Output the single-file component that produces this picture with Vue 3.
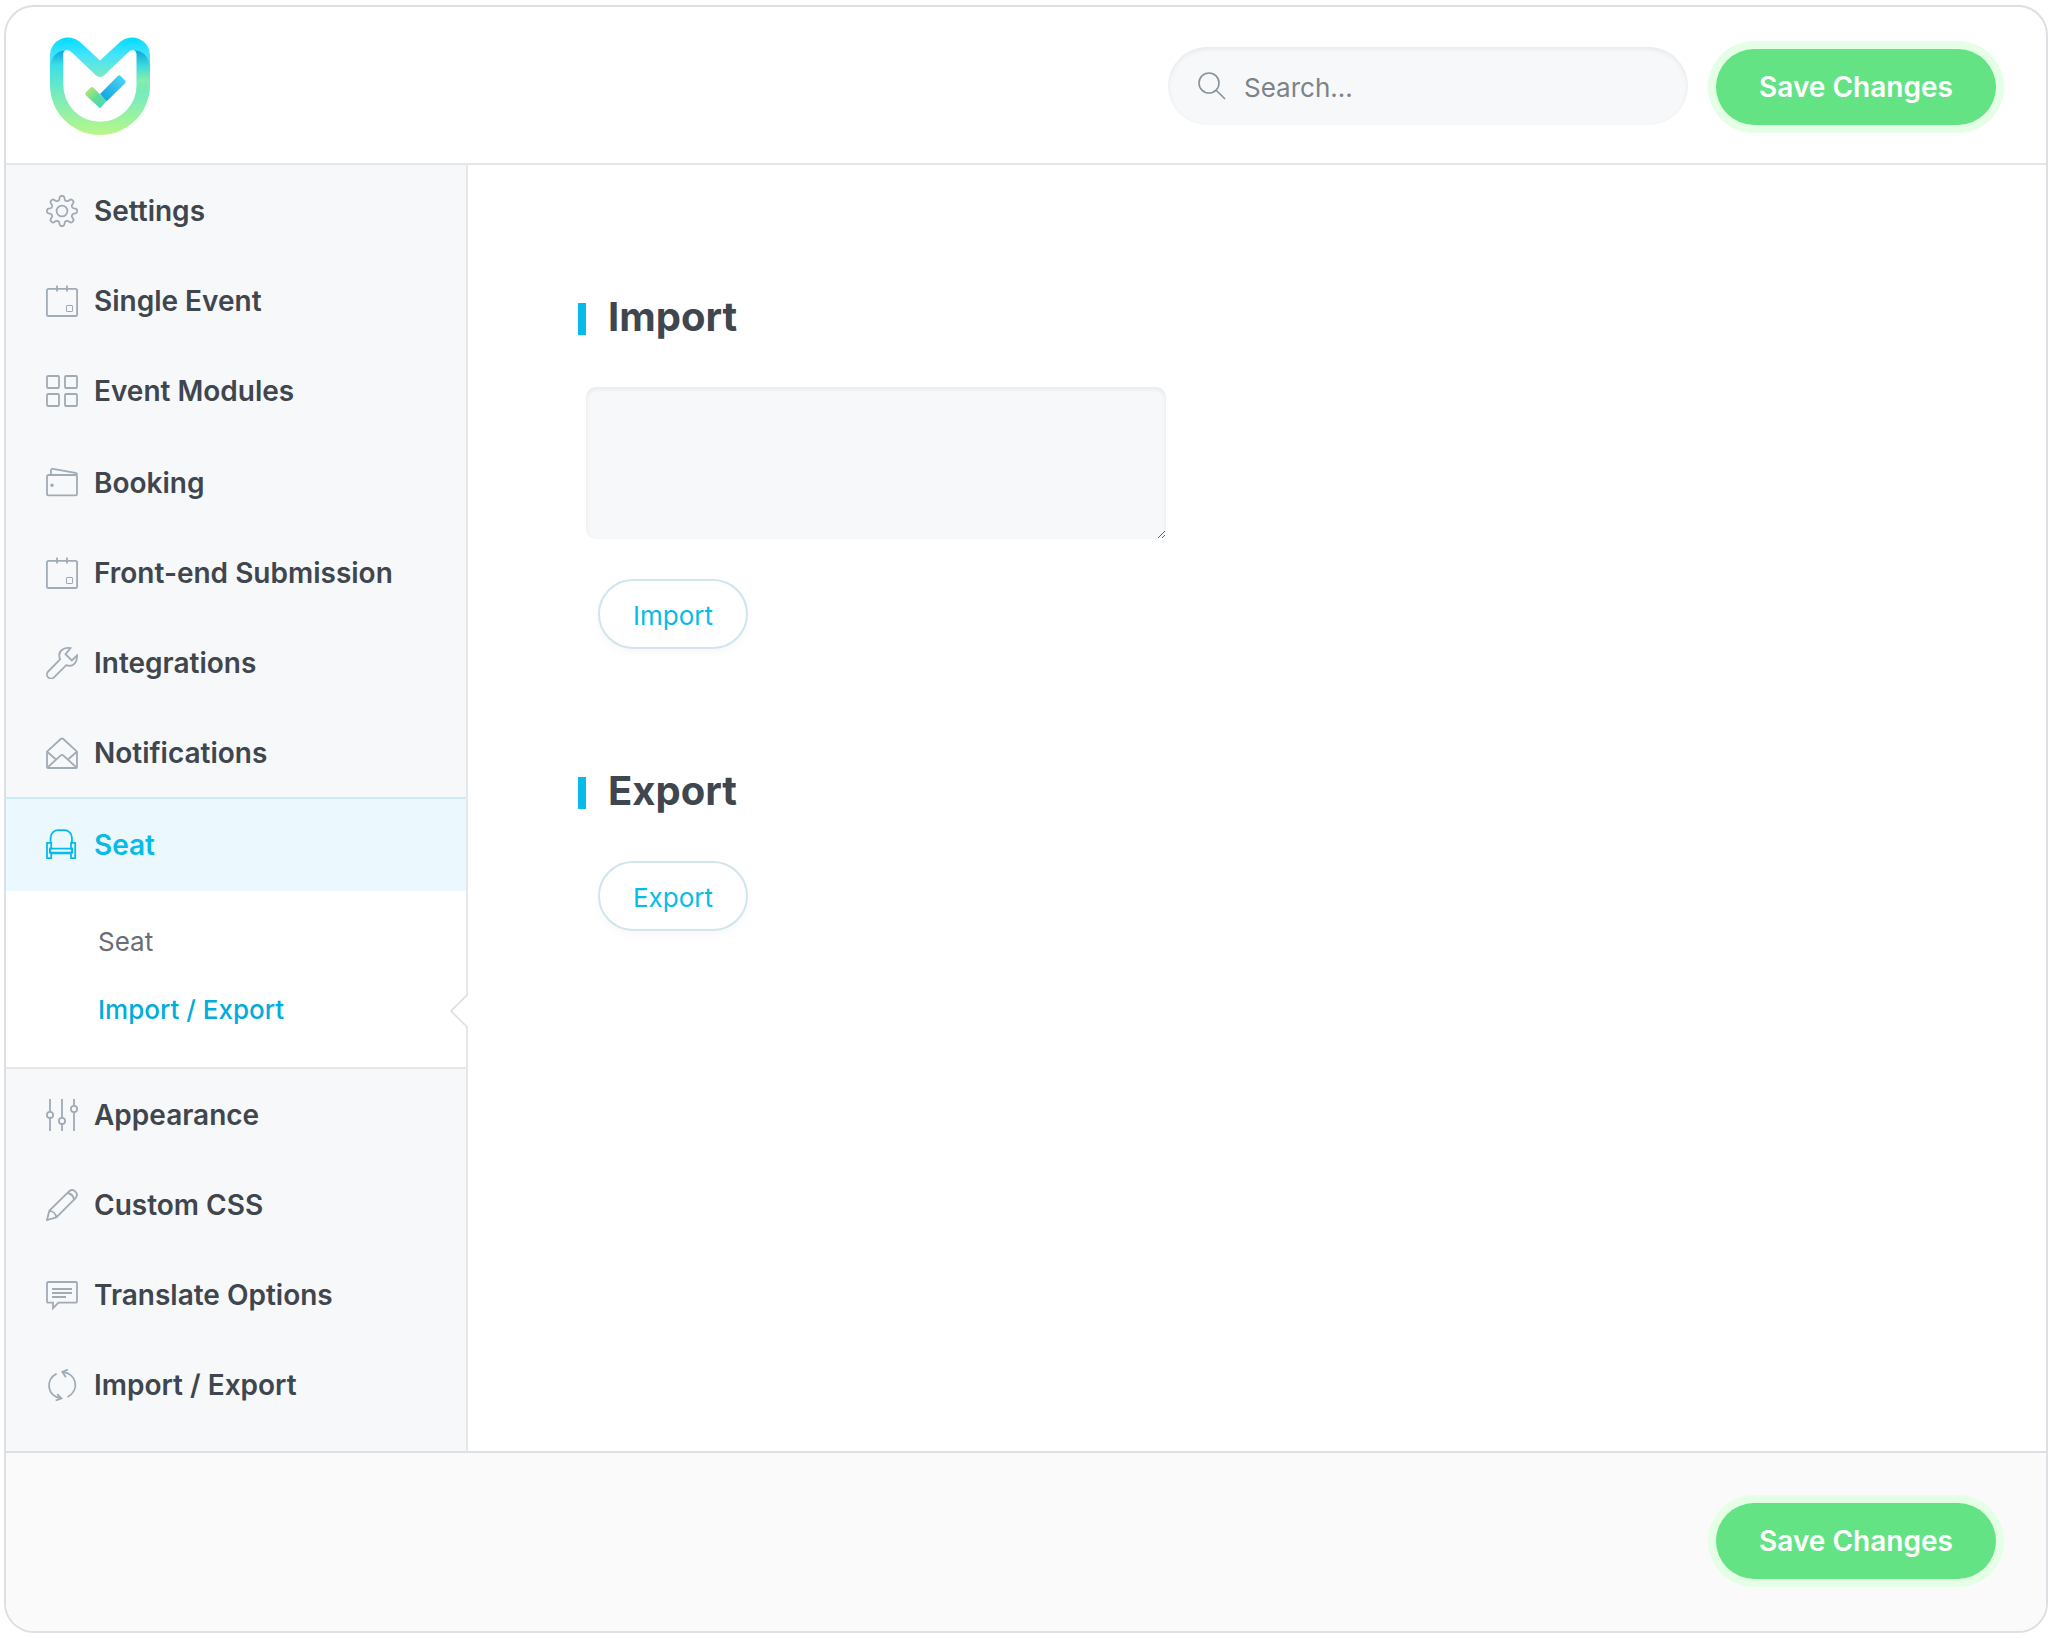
<script setup>
import { ref } from 'vue'

const search = ref('')
const importData = ref('')
const activeSub = ref('import-export')

// outline of an eight-toothed gear around the centre of a 32px box
const gearPath = () => {
  const points = []
  for (let i = 0; i < 144; i++) {
    const a = (i / 144) * Math.PI * 2
    const r = 13 + 2.1 * Math.tanh(2 * Math.cos(8 * a))
    points.push((16 + r * Math.cos(a)).toFixed(2) + ' ' + (16 + r * Math.sin(a)).toFixed(2))
  }
  return 'M' + points.join('L') + 'Z'
}

const calendar = [
  'M2.5 3.8h27a1.6 1.6 0 0 1 1.6 1.6v24a1.6 1.6 0 0 1-1.6 1.6h-27a1.6 1.6 0 0 1-1.6-1.6v-24a1.6 1.6 0 0 1 1.6-1.6z',
  'M11 .5v6M21 .5v6'
]

const icons = {
  settings: [gearPath(), 'M16 10.6a5.4 5.4 0 1 0 0 10.8a5.4 5.4 0 1 0 0-10.8z'],
  calendar,
  grid: [
    'M2 1h10a1 1 0 0 1 1 1v10a1 1 0 0 1-1 1h-10a1 1 0 0 1-1-1v-10a1 1 0 0 1 1-1z',
    'M20 1h10a1 1 0 0 1 1 1v10a1 1 0 0 1-1 1h-10a1 1 0 0 1-1-1v-10a1 1 0 0 1 1-1z',
    'M2 19h10a1 1 0 0 1 1 1v10a1 1 0 0 1-1 1h-10a1 1 0 0 1-1-1v-10a1 1 0 0 1 1-1z',
    'M20 19h10a1 1 0 0 1 1 1v10a1 1 0 0 1-1 1h-10a1 1 0 0 1-1-1v-10a1 1 0 0 1 1-1z'
  ],
  wallet: [
    'M2.6 8h26.8a1.600 1.600 0 0 1 1.600 1.600v17.200a1.600 1.600 0 0 1-1.600 1.600h-26.800a1.600 1.600 0 0 1-1.600-1.600v-17.200a1.600 1.600 0 0 1 1.600-1.600z',
    'M5 8v-4.600a1.700 1.700 0 0 1 2-1.600l22.400 4a1.800 1.800 0 0 1 1.600 2',
    'M6 17.300a.9.9 0 1 0 0 1.800a.9.9 0 1 0 0-1.800z'
  ],
  wrench: [
    'M24.500 1.200C18.500 0 13 3.500 13.200 8.500c.1 1.300.3 2.300.9 3.800L2.200 24.500a4 4 0 0 0 5.800 5.800L20.200 18.200c1.200.4 2.300.6 3.600.6c4.500 0 7.600-4.500 7.200-10.300l-5.200 5l-6.300-6.400z'
  ],
  mail: [
    'M1 14.600L14.700 2a2 2 0 0 1 2.600 0L31 14.600v15.400a1 1 0 0 1-1 1h-28a1 1 0 0 1-1-1z',
    'M1.400 15l8.400 7.200M30.600 15l-8.400 7.200',
    'M1.600 30.400L14.500 18.600a2.200 2.200 0 0 1 3 0L30.400 30.400'
  ],
  seat: [
    'M4.600 13.200v-4.700a7.500 7.500 0 0 1 7.500-7.300h6.300a7.500 7.500 0 0 1 7.500 7.300v4.700',
    'M1 13.800h4.200v5.800h-1.200v4h1.200v5.600h-4.200z',
    'M29.200 13.800h-4.200v5.800h1.200v4h-1.200v5.600h4.200z',
    'M4 19.600h22.200v4h-22.200z',
    'M5.200 24.400h19.600'
  ],
  sliders: [
    'M4 0v12.800M4 19v13M16 0v18.800M16 25v7M28 0v7M28 13v19',
    'M4 12.800a3.100 3.100 0 1 0 0 6.200a3.100 3.100 0 1 0 0-6.200z',
    'M16 18.800a3.100 3.100 0 1 0 0 6.200a3.100 3.100 0 1 0 0-6.200z',
    'M28 6.900a3.100 3.100 0 1 0 0 6.200a3.100 3.100 0 1 0 0-6.200z'
  ],
  pencil: [
    'M1 31l2.300-9.200L23.200 2.200a4.700 4.700 0 0 1 6.600 6.600L10.300 28.400z',
    'M3.300 21.800a7.500 7.500 0 0 1 7 6.600',
    'M21.400 4a8 8 0 0 1 6.600 6.600'
  ],
  comment: [
    'M2 3h28a1 1 0 0 1 1 1v18.600a1 1 0 0 1-1 1h-17.600l-5.400 5.600v-5.600h-5a1 1 0 0 1-1-1v-18.600a1 1 0 0 1 1-1z',
    'M6 10h20M6 14h20M6 18h14'
  ],
  refresh: [
    'M10.600 4.600C-1 10.800.8 27 15 29.400M21.600 28C34 21 31 4.600 16.600 3',
    'M11.200 25.200l4.200 4.100l-5.700 2.200M21.900.6l-5.600 2.300l3.600 5.300'
  ]
}

const groups = [
  [
    { name: 'Settings', icon: 'settings' },
    { name: 'Single Event', icon: 'calendar' },
    { name: 'Event Modules', icon: 'grid' }
  ],
  [
    { name: 'Booking', icon: 'wallet' },
    { name: 'Front-end Submission', icon: 'calendar' },
    { name: 'Integrations', icon: 'wrench' },
    { name: 'Notifications', icon: 'mail' }
  ],
  [
    {
      name: 'Seat',
      icon: 'seat',
      active: true,
      children: [
        { id: 'seat', name: 'Seat' },
        { id: 'import-export', name: 'Import / Export' }
      ]
    }
  ],
  [
    { name: 'Appearance', icon: 'sliders' },
    { name: 'Custom CSS', icon: 'pencil' },
    { name: 'Translate Options', icon: 'comment' },
    { name: 'Import / Export', icon: 'refresh' }
  ]
]
</script>

<template>
  <div class="page">
    <div class="panel">
      <header class="header">
        <svg class="logo" viewBox="0 0 100 98" aria-hidden="true">
          <defs>
            <linearGradient id="logo-u" x1="0" y1="0" x2="0" y2="1">
              <stop offset="0" stop-color="#0ba5de" />
              <stop offset="0.18" stop-color="#3bdfe8" />
              <stop offset="0.5" stop-color="#72ebc0" />
              <stop offset="1" stop-color="#b9f789" />
            </linearGradient>
            <linearGradient id="logo-r" x1="0" y1="0" x2="0" y2="1">
              <stop offset="0" stop-color="#0ba5de" />
              <stop offset="0.35" stop-color="#3fdcdc" />
              <stop offset="0.65" stop-color="#86eea9" />
              <stop offset="1" stop-color="#86eea9" stop-opacity="0" />
            </linearGradient>
            <linearGradient id="logo-m" x1="0" y1="0" x2="0" y2="1">
              <stop offset="0" stop-color="#00dcff" />
              <stop offset="0.45" stop-color="#45e3fb" />
              <stop offset="1" stop-color="#7aebc4" />
            </linearGradient>
            <linearGradient id="logo-c" x1="0" y1="1" x2="1" y2="0">
              <stop offset="0" stop-color="#0b9fda" />
              <stop offset="1" stop-color="#4fd9f8" />
            </linearGradient>
            <linearGradient id="logo-d" x1="0" y1="0" x2="1" y2="1">
              <stop offset="0.1" stop-color="#aeea6c" />
              <stop offset="0.5" stop-color="#62dc98" />
              <stop offset="1" stop-color="#3bdcc4" />
            </linearGradient>
          </defs>
          <path fill="url(#logo-u)" d="M0 20Q4 13 15 13Q13 15 13.300 19V48a36.700 36.700 0 0 0 73.400 0V19Q87 15 85 13Q96 13 100 20V48a50 50 0 0 1-100 0z" />
          <path fill="url(#logo-r)" d="M86.700 48V17Q86 14 84 13Q96 13 100 22V48Q100 54 98.500 60H84.700Q86.700 54 86.700 48z" />
          <path fill="url(#logo-m)" d="M0 30V18A18 18 0 0 1 30 5L50 23.500L70 5A18 18 0 0 1 100 18V30Q98 14 84 13.300Q81 12.500 78 15.500L54.500 38Q50 42 45.500 38L22 15.500Q19 12.500 16 13.300Q2 14 0 30z" />
          <path fill="url(#logo-c)" d="M50 57L67.500 39.200q1.700-1.700 3.400 0l4 4q1.700 1.700 0 3.400L56.500 64.500z" />
          <path fill="url(#logo-d)" d="M36 55.200l4.300-4.300q1.700-1.700 3.400 0L56.500 64L51.200 70.300q-1.200 1.200-2.400 0L36 58.500q-1.500-1.700 0-3.300z" />
        </svg>
        <div class="header-actions">
          <div class="search">
            <svg class="search-icon" viewBox="0 0 28 28" aria-hidden="true">
              <circle cx="11" cy="11" r="10" />
              <path d="M18.200 18.200L27 27" />
            </svg>
            <input v-model="search" type="text" placeholder="Search..." aria-label="Search" />
          </div>
          <button type="button" class="btn-save">Save Changes</button>
        </div>
      </header>

      <div class="body">
        <nav class="sidebar">
          <ul v-for="(group, i) in groups" :key="i" class="menu-group">
            <li v-for="item in group" :key="item.name">
              <a href="#" class="menu-item" :class="{ active: item.active }">
                <svg class="menu-icon" viewBox="0 0 32 32" aria-hidden="true">
                  <path v-for="(d, n) in icons[item.icon]" :key="n" :d="d" />
                  <rect v-if="item.icon === 'calendar'" class="thin" x="20.500" y="20.500" width="6" height="6" rx="0.500" />
                </svg>
                <span>{{ item.name }}</span>
              </a>
              <ul v-if="item.children" class="submenu">
                <li v-for="sub in item.children" :key="sub.id" class="submenu-row">
                  <a
                    href="#"
                    class="submenu-item"
                    :class="{ current: sub.id === activeSub }"
                    @click.prevent="activeSub = sub.id"
                  >{{ sub.name }}</a>
                  <svg v-if="sub.id === activeSub" class="notch" viewBox="0 0 18 34" aria-hidden="true">
                    <path d="M18 0L1 17L18 34" />
                  </svg>
                </li>
              </ul>
            </li>
          </ul>
        </nav>

        <main class="content">
          <section class="section">
            <h2 id="import-title">Import</h2>
            <textarea v-model="importData" aria-labelledby="import-title"></textarea>
            <button type="button" class="btn-outline">Import</button>
          </section>
          <section class="section">
            <h2>Export</h2>
            <button type="button" class="btn-outline">Export</button>
          </section>
        </main>
      </div>

      <footer class="footer">
        <button type="button" class="btn-save">Save Changes</button>
      </footer>
    </div>
  </div>
</template>

<style>
body {
  margin: 0;
  background: #fff;
}
</style>

<style scoped>
.page,
.page * {
  box-sizing: border-box;
}

.page {
  display: flex;
  min-height: 100vh;
  padding: 5px 6px 5px 4px;
  font-family: Inter, "Liberation Sans", sans-serif;
  color: #40464d;
}

.panel {
  flex: 1;
  display: flex;
  flex-direction: column;
  border: 2px solid #dcdfe3;
  border-radius: 30px;
  overflow: hidden;
  background: #fff;
}

.header {
  display: flex;
  justify-content: space-between;
  align-items: flex-start;
  height: 158px;
  padding: 30px 50px 0 44px;
  border-bottom: 2px solid #e3e7ea;
}

.logo {
  width: 100px;
  height: 98px;
}

.header-actions {
  display: flex;
  align-items: flex-end;
  gap: 28px;
  padding-top: 10px;
}

.search {
  display: flex;
  align-items: center;
  gap: 18px;
  width: 520px;
  height: 78px;
  padding: 0 30px;
  border-radius: 39px;
  background: #f7f8fa;
  box-shadow: inset 0 2px 5px rgba(0, 0, 0, 0.07);
}

.search-icon {
  flex: none;
  width: 28px;
  height: 28px;
  fill: none;
  stroke: #87929d;
  stroke-width: 1.6;
}

.search input {
  flex: 1;
  min-width: 0;
  padding: 2px 0 0;
  border: 0;
  outline: 0;
  background: none;
  font-family: inherit;
  font-size: 26px;
  color: #40464d;
}

.search input::placeholder {
  color: #7c8389;
}

.btn-save {
  width: 280px;
  height: 76px;
  border: 0;
  border-radius: 38px;
  background: #64e385;
  box-shadow: 0 0 0 8px #e4ffe6;
  font-family: inherit;
  font-size: 28px;
  font-weight: 600;
  color: #fff;
  cursor: pointer;
}

.body {
  flex: 1;
  display: flex;
}

.sidebar {
  display: flex;
  flex-direction: column;
  width: 462px;
  border-right: 2px solid #e5e8eb;
  background: #f7f8fa;
}

ul {
  margin: 0;
  padding: 0;
  list-style: none;
}

.menu-group:first-child {
  padding-bottom: 2px;
}

.menu-item {
  display: flex;
  align-items: center;
  gap: 16px;
  height: 90px;
  padding: 2px 40px 0;
  font-size: 28px;
  font-weight: 600;
  color: #40464d;
  text-decoration: none;
  white-space: nowrap;
}

.menu-item.active {
  height: 94px;
  padding-top: 0;
  border-top: 2px solid #c8edf6;
  background: #ebf9fe;
  color: #07bbe9;
}

.menu-icon {
  flex: none;
  width: 32px;
  height: 32px;
  fill: none;
  stroke: #a0abb6;
  stroke-width: 1.8;
}

.menu-icon .thin {
  stroke-width: 1;
}

.active .menu-icon {
  stroke: #07bbe9;
}

.submenu {
  padding: 17px 0 23px;
  border-bottom: 2px solid #e5e8eb;
  background: #fff;
}

.submenu-row {
  position: relative;
}

.submenu-item {
  display: block;
  padding-left: 92px;
  font-size: 26px;
  line-height: 68px;
  color: #686e74;
  text-decoration: none;
}

.submenu-item.current {
  font-weight: 500;
  color: #00acdc;
}

.notch {
  position: absolute;
  top: 18px;
  right: -2px;
  width: 18px;
  height: 34px;
  fill: #fff;
  stroke: #dcdfe3;
  stroke-width: 1.6;
}

.content {
  flex: 1;
  padding: 129px 110px;
}

.section {
  display: flex;
  flex-direction: column;
  align-items: flex-start;
  margin-bottom: 119px;
}

h2 {
  display: flex;
  align-items: center;
  gap: 22px;
  margin: 0 0 43px;
  font-size: 40px;
  font-weight: 700;
  line-height: 46px;
  padding-bottom: 4px;
}

h2::before {
  content: "";
  width: 8px;
  height: 32px;
  margin-top: 4px;
  background: #07bbe9;
}

textarea {
  width: 580px;
  max-width: 100%;
  height: 152px;
  margin: 0 8px 40px;
  padding: 16px;
  border: 0;
  border-radius: 10px;
  outline: 0;
  background: #f7f8fa;
  box-shadow: inset 0 2px 5px rgba(0, 0, 0, 0.07);
  font-family: inherit;
  font-size: 26px;
  color: #40464d;
}

.btn-outline {
  width: 150px;
  height: 70px;
  margin-left: 20px;
  padding: 2px 0 0;
  border: 2px solid #d1e5ed;
  border-radius: 35px;
  background: #fff;
  box-shadow: 0 4px 8px rgba(0, 0, 0, 0.03);
  font-family: inherit;
  font-size: 26px;
  color: #07bbe9;
  cursor: pointer;
}

.footer {
  display: flex;
  justify-content: flex-end;
  height: 180px;
  padding: 50px 50px 0;
  border-top: 2px solid #dcdfe3;
  background: #fafafa;
}
</style>
